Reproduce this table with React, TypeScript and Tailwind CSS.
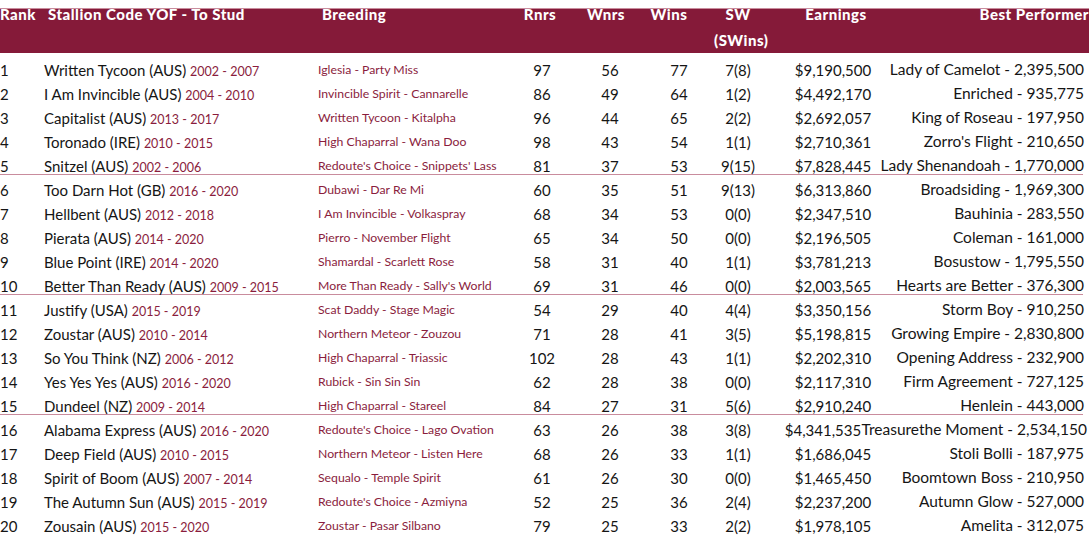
type Row = {
  rank: number;
  name: string;
  years: string;
  breeding: string;
  rnrs: string;
  wnrs: string;
  wins: string;
  sw: string;
  earnings: string;
  best: string;
  wide?: boolean;
};

const rows: Row[] = [
  { rank: 1, name: "Written Tycoon (AUS)", years: "2002 - 2007", breeding: "Iglesia - Party Miss", rnrs: "97", wnrs: "56", wins: "77", sw: "7(8)", earnings: "$9,190,500", best: "Lady of Camelot - 2,395,500" },
  { rank: 2, name: "I Am Invincible (AUS)", years: "2004 - 2010", breeding: "Invincible Spirit - Cannarelle", rnrs: "86", wnrs: "49", wins: "64", sw: "1(2)", earnings: "$4,492,170", best: "Enriched - 935,775" },
  { rank: 3, name: "Capitalist (AUS)", years: "2013 - 2017", breeding: "Written Tycoon - Kitalpha", rnrs: "96", wnrs: "44", wins: "65", sw: "2(2)", earnings: "$2,692,057", best: "King of Roseau - 197,950" },
  { rank: 4, name: "Toronado (IRE)", years: "2010 - 2015", breeding: "High Chaparral - Wana Doo", rnrs: "98", wnrs: "43", wins: "54", sw: "1(1)", earnings: "$2,710,361", best: "Zorro's Flight - 210,650" },
  { rank: 5, name: "Snitzel (AUS)", years: "2002 - 2006", breeding: "Redoute's Choice - Snippets' Lass", rnrs: "81", wnrs: "37", wins: "53", sw: "9(15)", earnings: "$7,828,445", best: "Lady Shenandoah - 1,770,000" },
  { rank: 6, name: "Too Darn Hot (GB)", years: "2016 - 2020", breeding: "Dubawi - Dar Re Mi", rnrs: "60", wnrs: "35", wins: "51", sw: "9(13)", earnings: "$6,313,860", best: "Broadsiding - 1,969,300" },
  { rank: 7, name: "Hellbent (AUS)", years: "2012 - 2018", breeding: "I Am Invincible - Volkaspray", rnrs: "68", wnrs: "34", wins: "53", sw: "0(0)", earnings: "$2,347,510", best: "Bauhinia - 283,550" },
  { rank: 8, name: "Pierata (AUS)", years: "2014 - 2020", breeding: "Pierro - November Flight", rnrs: "65", wnrs: "34", wins: "50", sw: "0(0)", earnings: "$2,196,505", best: "Coleman - 161,000" },
  { rank: 9, name: "Blue Point (IRE)", years: "2014 - 2020", breeding: "Shamardal - Scarlett Rose", rnrs: "58", wnrs: "31", wins: "40", sw: "1(1)", earnings: "$3,781,213", best: "Bosustow - 1,795,550" },
  { rank: 10, name: "Better Than Ready (AUS)", years: "2009 - 2015", breeding: "More Than Ready - Sally's World", rnrs: "69", wnrs: "31", wins: "46", sw: "0(0)", earnings: "$2,003,565", best: "Hearts are Better - 376,300" },
  { rank: 11, name: "Justify (USA)", years: "2015 - 2019", breeding: "Scat Daddy - Stage Magic", rnrs: "54", wnrs: "29", wins: "40", sw: "4(4)", earnings: "$3,350,156", best: "Storm Boy - 910,250" },
  { rank: 12, name: "Zoustar (AUS)", years: "2010 - 2014", breeding: "Northern Meteor - Zouzou", rnrs: "71", wnrs: "28", wins: "41", sw: "3(5)", earnings: "$5,198,815", best: "Growing Empire - 2,830,800" },
  { rank: 13, name: "So You Think (NZ)", years: "2006 - 2012", breeding: "High Chaparral - Triassic", rnrs: "102", wnrs: "28", wins: "43", sw: "1(1)", earnings: "$2,202,310", best: "Opening Address - 232,900" },
  { rank: 14, name: "Yes Yes Yes (AUS)", years: "2016 - 2020", breeding: "Rubick - Sin Sin Sin", rnrs: "62", wnrs: "28", wins: "38", sw: "0(0)", earnings: "$2,117,310", best: "Firm Agreement - 727,125" },
  { rank: 15, name: "Dundeel (NZ)", years: "2009 - 2014", breeding: "High Chaparral - Stareel", rnrs: "84", wnrs: "27", wins: "31", sw: "5(6)", earnings: "$2,910,240", best: "Henlein - 443,000" },
  { rank: 16, name: "Alabama Express (AUS)", years: "2016 - 2020", breeding: "Redoute's Choice - Lago Ovation", rnrs: "63", wnrs: "26", wins: "38", sw: "3(8)", earnings: "$4,341,535", best: "Treasurethe Moment - 2,534,150", wide: true },
  { rank: 17, name: "Deep Field (AUS)", years: "2010 - 2015", breeding: "Northern Meteor - Listen Here", rnrs: "68", wnrs: "26", wins: "33", sw: "1(1)", earnings: "$1,686,045", best: "Stoli Bolli - 187,975" },
  { rank: 18, name: "Spirit of Boom (AUS)", years: "2007 - 2014", breeding: "Sequalo - Temple Spirit", rnrs: "61", wnrs: "26", wins: "30", sw: "0(0)", earnings: "$1,465,450", best: "Boomtown Boss - 210,950" },
  { rank: 19, name: "The Autumn Sun (AUS)", years: "2015 - 2019", breeding: "Redoute's Choice - Azmiyna", rnrs: "52", wnrs: "25", wins: "36", sw: "2(4)", earnings: "$2,237,200", best: "Autumn Glow - 527,000" },
  { rank: 20, name: "Zousain (AUS)", years: "2015 - 2020", breeding: "Zoustar - Pasar Silbano", rnrs: "79", wnrs: "25", wins: "33", sw: "2(2)", earnings: "$1,978,105", best: "Amelita - 312,075" },
];

const cols = "grid grid-cols-[44px_274px_190px_68px_68px_70px_48px_142px_180px]";

function StallionRow({ row }: { row: Row }) {
  return (
    <div className={`${cols} h-[24px] items-center whitespace-nowrap text-[15px] text-[#151515]`}>
      <div>{row.rank}</div>
      <div>
        {row.name} <span className="text-[12.5px] text-[#8a1d3d]">{row.years}</span>
      </div>
      <div className="text-[12.25px] text-[#8a1d3d]">{row.breeding}</div>
      <div className="text-center">{row.rnrs}</div>
      <div className="text-center">{row.wnrs}</div>
      <div className="text-center">{row.wins}</div>
      <div className="text-center">{row.sw}</div>
      <div className={row.wide ? "pr-[20px] text-center" : "text-center"}>{row.earnings}</div>
      <div className={row.wide ? "-mr-[3px] flex justify-end text-[15.5px]" : "flex justify-end text-[15.5px]"}>
        {row.best}
      </div>
    </div>
  );
}

export default function App() {
  const groups = [rows.slice(0, 5), rows.slice(5, 10), rows.slice(10, 15), rows.slice(15, 20)];

  return (
    <div className="h-[555px] w-[1089px] overflow-hidden bg-white font-['Lato',sans-serif]">
      <div className="mt-[8px] h-[45px] border-t border-[#c98c9d] bg-[#851a39]">
        <div
          className={`${cols} -mt-[8px] whitespace-nowrap text-[15px] font-black leading-[26px] tracking-[0.5px] text-white`}
        >
          <div>Rank</div>
          <div className="pl-[4px]">Stallion Code YOF - To Stud</div>
          <div className="pl-[4px]">Breeding</div>
          <div className="pr-[4px] text-center">Rnrs</div>
          <div className="pr-[8px] text-center">Wnrs</div>
          <div className="pr-[20px] text-center">Wins</div>
          <div className="text-center">
            SW
            <br />
            (SWins)
          </div>
          <div className="pl-[6px] text-center">Earnings</div>
          <div className="-mr-[5px] flex justify-end">Best Performer</div>
        </div>
      </div>

      <div className="mt-[5px]">
        {groups.map((group, i) => (
          <div key={i}>
            {group.map((row) => (
              <StallionRow key={row.rank} row={row} />
            ))}
            {i < 3 ? <div className="-mt-[4px] mb-[3px] h-px w-[1083px] bg-[#c98c9d]" /> : null}
          </div>
        ))}
      </div>
    </div>
  );
}
